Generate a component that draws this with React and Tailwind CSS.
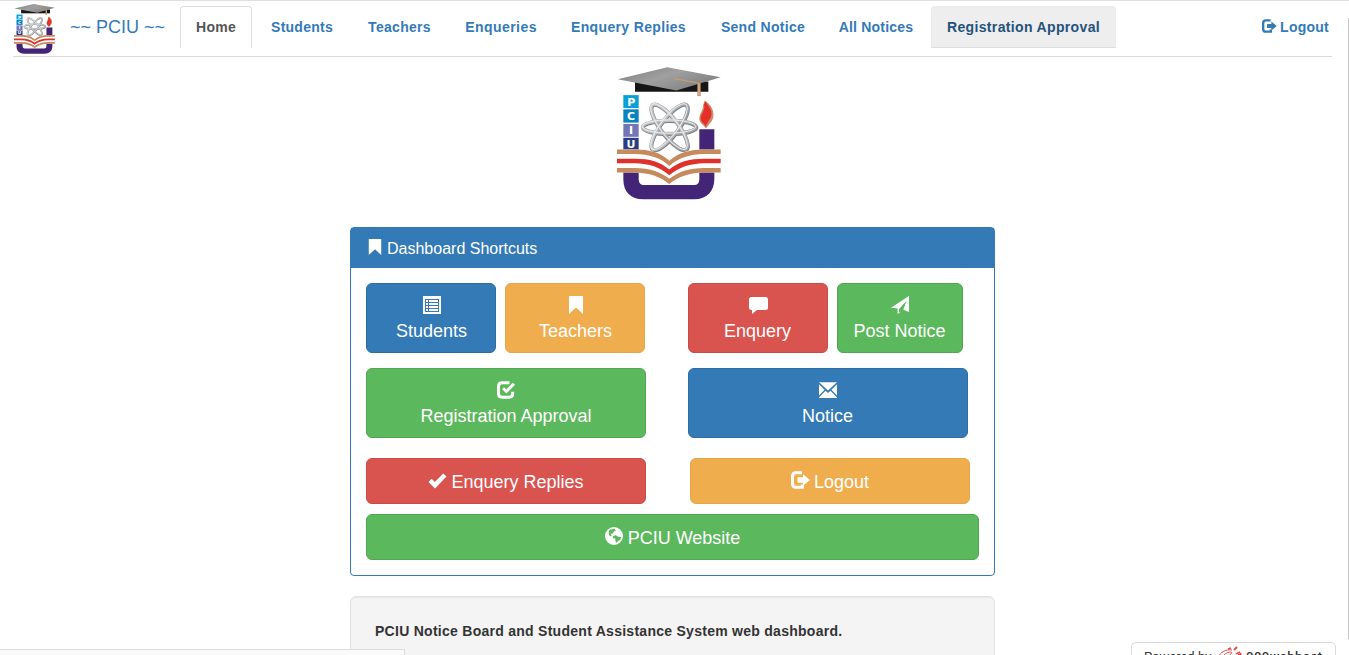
import React from "react";

const navItems = [
  { label: "Home", box: "w-[72px] border border-b-0 border-[#ddd] bg-white text-[#555]", tracking: "tracking-[0.25px]" },
  { label: "Students", box: "w-[95px] pl-px text-[#337ab7]", tracking: "tracking-[0.25px]" },
  { label: "Teachers", box: "w-[96px] pl-px text-[#337ab7]", tracking: "tracking-[0.3px]" },
  { label: "Enqueries", box: "w-[104px] text-[#337ab7]", tracking: "tracking-[0.45px]" },
  { label: "Enquery Replies", box: "w-[147px] text-[#337ab7]", tracking: "tracking-[0.35px]" },
  { label: "Send Notice", box: "w-[117px] pl-px text-[#337ab7]", tracking: "tracking-[0.3px]" },
  { label: "All Notices", box: "w-[106px] text-[#337ab7]", tracking: "tracking-[0.2px]" },
  { label: "Registration Approval", box: "w-[185px] border border-[#ebebeb] border-b-[#ddd] bg-[#eee] text-[#23527c]", tracking: "tracking-[0.35px]" },
];

const colors = {
  blue: "bg-[#337ab7] border-[#2e6da4]",
  orange: "bg-[#f0ad4e] border-[#e7a549]",
  red: "bg-[#d9534f] border-[#c74b47]",
  green: "bg-[#5cb85c] border-[#4fa750]",
};

function Logo({ className }) {
  return (
    <svg className={className} viewBox="50 34 312 402" preserveAspectRatio="none">
      <defs>
        <linearGradient id="cap" x1="0" y1="0" x2="1" y2="0.6">
          <stop offset="0" stopColor="#7d7d7d" />
          <stop offset="0.5" stopColor="#a0a0a0" />
          <stop offset="1" stopColor="#808080" />
        </linearGradient>
        <linearGradient id="silver" gradientUnits="userSpaceOnUse" x1="170" y1="150" x2="240" y2="290">
          <stop offset="0" stopColor="#cfd1d3" />
          <stop offset="0.5" stopColor="#b4b7ba" />
          <stop offset="1" stopColor="#8f9499" />
        </linearGradient>
      </defs>
      <path d="M104 78H324V109H104Z" fill="#161616" />
      <path d="M52 71L201 35L361 65L228 105Z" fill="url(#cap)" />
      <path d="M222 69L296 83V122" fill="none" stroke="#c99c70" strokeWidth="4" />
      <path d="M291 82H301V122H291Z" fill="#c18f66" />
      <path d="M296 84V120" stroke="#f3d7b3" strokeWidth="2" />
      <path d="M69 119H115V158H69Z" fill="#08a0d6" />
      <path d="M69 162H115V202H69Z" fill="#0784be" />
      <path d="M69 206H115V245H69Z" fill="#7475b7" />
      <path d="M69 248H115V284H69Z" fill="#293c87" />
      <g fill="#fff" fontFamily="DejaVu Sans" fontWeight="bold" fontSize="33" textAnchor="middle">
        <text x="93" y="151">P</text>
        <text x="92" y="194">C</text>
        <text x="92" y="237">I</text>
        <text x="92" y="279">U</text>
      </g>
      <g fill="none">
        <g stroke="#7b8085" strokeWidth="12">
          <ellipse cx="208" cy="217" rx="80" ry="20" />
          <ellipse cx="208" cy="217" rx="84" ry="26" transform="rotate(53 208 217)" />
          <ellipse cx="208" cy="217" rx="84" ry="26" transform="rotate(-53 208 217)" />
        </g>
        <g stroke="url(#silver)" strokeWidth="10">
          <ellipse cx="207" cy="215" rx="80" ry="20" />
          <ellipse cx="207" cy="215" rx="84" ry="26" transform="rotate(-53 207 215)" />
          <ellipse cx="207" cy="215" rx="84" ry="26" transform="rotate(53 207 215)" />
        </g>
        <g stroke="#eceded" strokeWidth="3">
          <ellipse cx="206" cy="214" rx="80" ry="20" />
          <ellipse cx="206" cy="214" rx="84" ry="26" transform="rotate(-53 206 214)" />
          <ellipse cx="206" cy="214" rx="84" ry="26" transform="rotate(53 206 214)" />
        </g>
      </g>
      <path d="M313 135C331 146 342 164 339 184C337 199 325 207 317 220C310 208 296 203 297 188C298 173 309 165 308 150Z" fill="#c98d69" />
      <path d="M315 138C323 151 337 164 333 180C330 194 319 202 317 215C311 203 299 199 301 186C304 171 316 163 311 147Z" fill="#e52f28" />
      <path d="M297 222H342V372C342 410 320 434 282 434H129C91 434 69 411 69 374V346H115V372C115 385 121 391 132 391H280C292 391 297 385 297 372Z" fill="#432477" />
      <path d="M50 283H103C150 284 181 291 207 315C236 290 269 283 311 283H361V353H308C271 354 233 364 207 387C180 363 146 354 103 353H50Z" fill="#fff" />
      <path d="M50 283H103C150 283 180 292 207 317C235 292 269 283 311 283H361V297H311C269 298 236 308 207 333C180 308 147 298 103 297H50Z" fill="#c68a5c" />
      <path d="M50 311H103C149 311 179 320 207 344C236 319 269 311 311 311H361V325H311C269 326 236 337 207 361C179 337 147 326 103 325H50Z" fill="#df302c" />
      <path d="M50 339H103C147 339 180 350 207 372C236 349 269 339 311 339H361V353H311C269 354 235 364 207 388C179 365 147 354 103 353H50Z" fill="#c68a5c" />
    </svg>
  );
}

function Icon({ name, className = "size-[18px]" }) {
  return (
    <svg className={`inline-block shrink-0 ${className}`} viewBox="0 0 18 18" fill="currentColor">
      {name === "bookmark" && <path d="M2 0H16V18L9 11.5L2 18Z" />}
      {name === "list" && (
        <path
          fillRule="evenodd"
          d="M0 0H18V18H0ZM2 3V16H16V3ZM3 4H5V6H3ZM6 4H15V6H6ZM3 7H5V9H3ZM6 7H15V9H6ZM3 10H5V12H3ZM6 10H15V12H6ZM3 13H5V15H3ZM6 13H15V15H6Z"
        />
      )}
      {name === "comment" && (
        <path d="M2.5 1H16.5Q19 1 19 3.5V11.5Q19 14 16.5 14H8L3 18V14H2.5Q0 14 0 11.5V3.5Q0 1 2.5 1Z" />
      )}
      {name === "send" && <path d="M18 0V16L12.3 13.7L15.6 4.5L8 13.3V17.6L10.4 15L6.6 18V12.6L0 11.8Z" />}
      {name === "check" && (
        <>
          <path
            d="M12.5 1.7H5.2Q1.5 1.7 1.5 5.4V12.6Q1.5 16.3 5.2 16.3H12Q15.7 16.3 15.7 12.6V10.8"
            fill="none"
            stroke="currentColor"
            strokeWidth="3"
          />
          <path d="M5.2 8.2L7 6.3L9.3 8.4L15.8 1.7L18 3.8L9.4 12.6Z" />
        </>
      )}
      {name === "envelope" && (
        <>
          <path d="M0 1.3H18L9 9.5Z" />
          <path d="M0 3.2L5.6 8.8L0 14.5ZM18 3.2L12.4 8.8L18 14.5Z" />
          <path d="M6.5 9.8L9 12L11.5 9.8L18 16.4V17H0V16.4Z" />
        </>
      )}
      {name === "ok" && <path d="M0.5 11L3.5 7.8L6.9 11.1L15.2 2.5L18.5 5.6L7 17.4Z" />}
      {name === "logout" && (
        <>
          <path
            d="M11 1.8H5Q1.5 1.8 1.5 5.3V12.7Q1.5 16.2 5 16.2H11.4V13.5"
            fill="none"
            stroke="currentColor"
            strokeWidth="3"
          />
          <path d="M6.5 6.3H12V3.2L19 9L12 14.8V11.7H6.5Z" />
        </>
      )}
      {name === "globe" && (
        <>
          <circle cx="9" cy="9" r="9" />
          <path
            className="text-[#5cb85c]"
            fill="currentColor"
            d="M9.5 1.5L6.8 2.6L5 2.2L3.7 4.8L4.1 8.2L5.8 9.4L6.7 8.3L5.7 7.1L7.8 6.2L9.3 4.2L11.2 3.3L9.8 2.4ZM7.8 9L10.7 8.2L13.2 9.8L16.2 10.3L15.3 12.8L13 14.1L11.7 16L10.2 13.7L10.5 11.8L8 10.9Z"
          />
        </>
      )}
    </svg>
  );
}

function Shortcut({ icon, label, color, size, stacked }) {
  return (
    <button
      className={`flex items-center justify-center rounded-[6px] border text-[18px] leading-[26px] text-white ${
        stacked ? "h-[70px] flex-col pt-px" : "h-[46px] gap-[5px]"
      } ${colors[color]} ${size}`}
    >
      <Icon name={icon} className={stacked ? "size-[18px] mt-[2px] mb-[4px] overflow-visible" : "size-[18px] -mt-[3px] overflow-visible"} />
      <span className={stacked ? "" : "pt-px"}>{label}</span>
    </button>
  );
}

export default function App() {
  return (
    <div className="relative flex h-[655px] w-full flex-col overflow-hidden border-t border-[#e0e0e0] bg-white font-['Liberation_Sans',Arial,sans-serif] text-[14px] text-[#333]">
      <header className="ml-[13px] flex h-[56px] w-[1319px] shrink-0 border-b border-[#d9d9d9]">
        <Logo className="mt-[3px] ml-px h-[50px] w-[41px] shrink-0" />
        <div className="mt-[12px] ml-[15px] w-[110px] shrink-0 text-[18px] leading-[28px] whitespace-nowrap text-[#337ab7]">~~ PCIU ~~</div>
        <nav className="mt-[5px] flex h-[42px] gap-[2px]">
          {navItems.map((item) => (
            <a
              key={item.label}
              className={`flex shrink-0 items-center justify-center rounded-t-[4px] font-bold whitespace-nowrap ${item.box} ${item.tracking}`}
            >
              {item.label}
            </a>
          ))}
        </nav>
        <a className="mt-[5px] mr-[3px] ml-auto flex h-[42px] items-center gap-[4px] font-bold tracking-[0.25px] text-[#337ab7]">
          <Icon name="logout" className="size-[14px] -mt-[2px] overflow-visible" />
          Logout
        </a>
      </header>

      <main className="ml-[350px] flex w-[645px] shrink-0 flex-col">
        <Logo className="mt-[10px] ml-[267px] h-[133px] w-[104px] shrink-0" />
        <section className="mt-[27px] h-[349px] rounded-[4px] border border-[#337ab7]">
          <h1 className="flex h-[40px] items-center gap-[4px] bg-[#337ab7] pl-[16px] text-[16px] text-white">
            <Icon name="bookmark" className="size-[16px] -mt-[2px]" />
            <span className="pt-[2px]">Dashboard Shortcuts</span>
          </h1>
          <div className="flex flex-col px-[15px] pt-[15px]">
            <div className="flex">
              <Shortcut stacked icon="list" label="Students" color="blue" size="w-[130px] pl-px" />
              <Shortcut stacked icon="bookmark" label="Teachers" color="orange" size="ml-[9px] w-[140px] pl-px" />
              <Shortcut stacked icon="comment" label="Enquery" color="red" size="ml-[43px] w-[140px] pr-px" />
              <Shortcut stacked icon="send" label="Post Notice" color="green" size="ml-[9px] w-[126px] pr-px" />
            </div>
            <div className="mt-[15px] flex gap-[42px]">
              <Shortcut stacked icon="check" label="Registration Approval" color="green" size="w-[280px]" />
              <Shortcut stacked icon="envelope" label="Notice" color="blue" size="w-[280px] pr-px" />
            </div>
            <div className="mt-[20px] flex gap-[44px]">
              <Shortcut icon="ok" label="Enquery Replies" color="red" size="w-[280px]" />
              <Shortcut icon="logout" label="Logout" color="orange" size="w-[280px]" />
            </div>
            <div className="mt-[10px] flex">
              <Shortcut icon="globe" label="PCIU Website" color="green" size="w-[613px]" />
            </div>
          </div>
        </section>
        <section className="mt-[20px] h-[110px] rounded-[6px] border border-[#e3e3e3] bg-[#f4f4f4] px-[24px] pt-[24px] shadow-[inset_0_1px_1px_rgba(0,0,0,0.05)]">
          <p className="leading-[20px] font-bold tracking-[0.27px] whitespace-nowrap">PCIU Notice Board and Student Assistance System web dashboard.</p>
        </section>
      </main>

      <div className="absolute bottom-0 left-0 h-[6px] w-[405px] border-t border-r border-[#dcdcdc] bg-[#fafafa]" />
      <div className="absolute top-[641px] left-[1131px] flex h-[32px] w-[205px] rounded-t-[5px] border border-[#d9d9d9] bg-white pt-[6px] pl-[12px] font-['Roboto',sans-serif] text-[13px] leading-[16px] whitespace-nowrap text-[#333]">
        <span className="w-[72px]">Powered by</span>
        <svg className="-mt-[3px] h-[26px] w-[26px]" viewBox="0 0 26 26" fill="none" stroke="#df4b4b">
          <path d="M2 12C4 6 10 3 16 4M5 13C7 9 11 6 15 6M8 13L12 9M13 11L16 6" strokeWidth="1" />
          <path d="M12 3L15 2M18 4L21 1M20 8L24 6" strokeWidth="1.8" />
          <path d="M22 9L25 7V12Z" fill="#d52c2c" />
        </svg>
        <span className="ml-[4px] font-medium tracking-[0.5px]">000webhost</span>
      </div>
      <div className="absolute top-[17px] right-0 h-[621px] w-px bg-[#c8c8c8]" />
    </div>
  );
}
